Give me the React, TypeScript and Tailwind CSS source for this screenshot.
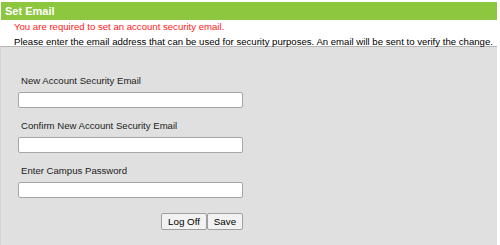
export default function App() {
  const fields = [
    { label: "New Account Security Email", type: "text" },
    { label: "Confirm New Account Security Email", type: "text" },
    { label: "Enter Campus Password", type: "password" },
  ];

  return (
    <div className="w-[500px] h-[245px] overflow-hidden bg-white font-['Liberation_Sans',Arial,sans-serif] text-[9.6px]">
      <div className="pt-[2px] pl-[1px] pr-[3px]">
        {/* Title bar */}
        <div className="h-[18px] bg-[#8dc63f] pl-[4px] text-[11px] font-bold leading-[18px] text-white">Set Email</div>

        {/* Messages */}
        <div className="pl-[13px] pt-[1px]">
          <p className="h-[14px] leading-[12px] text-[#ff2020]">You are required to set an account security email.</p>
          <p className="h-[11px] leading-[13px] text-black">
            Please enter the email address that can be used for security purposes. An email will be sent to verify the change.
          </p>
        </div>
      </div>

      {/* Form panel */}
      <div className="h-full border-t border-[#b4b4b4] border-l border-l-[#d4d4d4] mr-[3px] bg-[#e0e0e0] pl-[17px] pt-[27px]">
        <div className="flex w-[225px] flex-col">
          {fields.map((f, i) => (
            <div key={i} className="flex flex-col">
              <label className="ml-[3px] h-[13px] leading-[13px] text-[#222]">{f.label}</label>
              <input
                type={f.type}
                className="mt-[5px] mb-[11px] h-[16px] w-[225px] rounded-[2px] border border-[#a6a6a6] bg-white outline-none"
              />
            </div>
          ))}
          <div className="mt-[4px] flex justify-end">
            <button className="h-[17px] w-[46px] rounded-[2px] border border-[#a0a0a0] bg-[#f2f2f2] text-[9.8px] leading-[15px] text-black">Log Off</button>
            <button className="h-[17px] w-[36px] rounded-[2px] border border-[#a0a0a0] bg-[#f2f2f2] text-[9.8px] leading-[15px] text-black">Save</button>
          </div>
        </div>
      </div>
    </div>
  );
}
